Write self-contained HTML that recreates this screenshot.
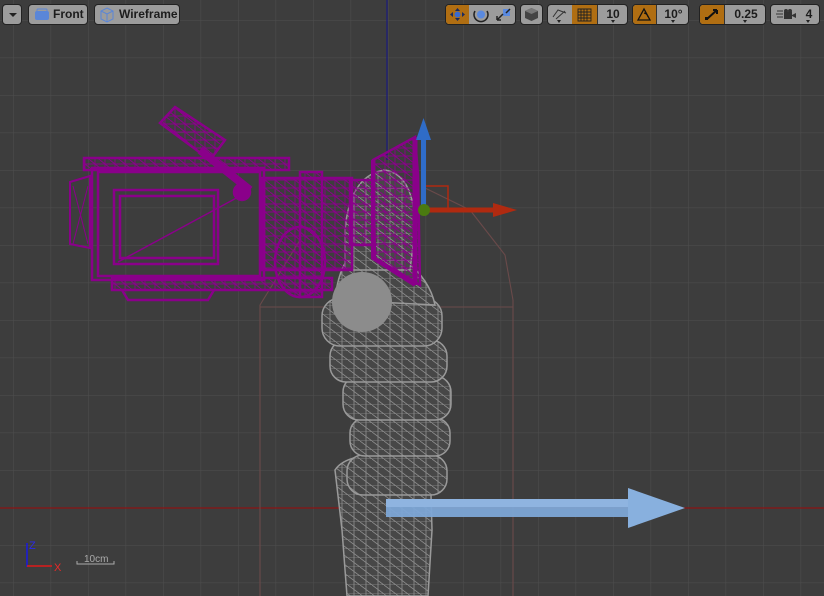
<!DOCTYPE html>
<html><head><meta charset="utf-8"><style>
html,body{margin:0;padding:0;width:824px;height:596px;overflow:hidden;background:#3d3d3d;font-family:"Liberation Sans",sans-serif}
.b{position:absolute;top:4px;height:21px;background:#9c9c9c;border:1px solid #222;border-radius:4px;box-sizing:border-box;font-size:12px;font-weight:bold;color:#1c1c1c;line-height:19px}
.o{position:absolute;top:0;bottom:0;background:#b06e12}
.sep{position:absolute;top:0;bottom:0;width:1px;background:#333}
.t{position:absolute;top:0;text-align:center}
.c{position:absolute;bottom:1px;width:0;height:0;border-left:2.5px solid transparent;border-right:2.5px solid transparent;border-top:3px solid #222}
</style></head><body>
<svg width="824" height="596" style="position:absolute;left:0;top:0">
<defs>
<pattern id="g" width="37.5" height="37.5" patternUnits="userSpaceOnUse" x="13" y="20">
<path d="M0 0V37.5M0 0H37.5" stroke="#4c4c4c" stroke-width="1.2" fill="none"/>
</pattern>
<pattern id="w" width="12" height="9" patternUnits="userSpaceOnUse">
<rect width="12" height="9" fill="#474747"/>
<path d="M0 0L12 9M0 9H12M6 0V9" stroke="#8e8e8e" stroke-width="0.8"/>
</pattern>
<pattern id="m" width="10" height="8" patternUnits="userSpaceOnUse">
<path d="M0 0L10 8M0 4H10M5 0V8" stroke="#8c008c" stroke-width="0.9"/>
</pattern>
</defs>
<rect width="824" height="596" fill="url(#g)"/>
<line x1="0" y1="508" x2="824" y2="508" stroke="#8a1414" stroke-width="1.2"/>
<line x1="387" y1="0" x2="387" y2="160" stroke="#1d1d7a" stroke-width="1.3"/>
<path d="M260 596V305L300 240M425 188L470 210L505 255L513 300V596M260 307H513M387 300V596" stroke="#6a4a4a" stroke-width="1.1" fill="none"/>
<g stroke="#9a9a9a" stroke-width="1.5" fill="url(#w)">
<path d="M347 596L342 530L335 470Q345 455 380 455L430 460L432 530L428 596Z"/>
<rect x="347" y="455" width="100" height="40" rx="16"/>
<rect x="350" y="418" width="100" height="38" rx="15"/>
<rect x="343" y="376" width="108" height="44" rx="16"/>
<rect x="330" y="340" width="117" height="42" rx="16"/>
<rect x="322" y="298" width="120" height="48" rx="18"/>
<path d="M335 300Q340 250 370 245L405 260Q430 280 435 305Z"/>
<path d="M345 230Q350 175 385 170Q415 175 415 230L410 270H345Z"/>
</g>
<circle cx="362" cy="302" r="30" fill="#8c8c8c"/>
<g stroke="#8a008a" stroke-width="2.5" fill="none">
<rect x="84" y="158" width="205" height="12" fill="url(#m)"/>
<rect x="92" y="168" width="172" height="112"/>
<rect x="98" y="172" width="162" height="104"/>
<rect x="114" y="190" width="104" height="74"/>
<rect x="120" y="196" width="94" height="62"/>
<line x1="118" y1="262" x2="242" y2="195" stroke-width="1.5"/>
<path d="M70 182L90 176V248L70 244Z" stroke-width="2"/>
<path d="M73 186L88 244M73 244L88 186" stroke-width="1"/>
<rect x="112" y="278" width="220" height="12" fill="url(#m)"/>
<path d="M122 290L128 300H208L214 290"/>
<path d="M160 123L175 107L225 140L210 160Z" fill="url(#m)"/>
<path d="M200 150L250 190" stroke-width="8"/>
<circle cx="242" cy="192" r="8" fill="#8a008a"/>
<rect x="262" y="178" width="90" height="92" fill="url(#m)"/>
<rect x="300" y="172" width="22" height="125" fill="url(#m)"/>
<ellipse cx="300" cy="262" rx="25" ry="35" fill="url(#m)"/>
<rect x="350" y="180" width="24" height="65" fill="url(#m)"/>
<path d="M373 160L415 137L418 175L420 285L375 258Z" fill="url(#m)"/>
<path d="M373 160L373 258L415 285" stroke-width="4"/>
<path d="M415 137V285" stroke-width="5"/>
</g>
<path d="M423 186H448V210" stroke="#b02a10" stroke-width="1.5" fill="none"/>
<rect x="421" y="138" width="5" height="72" fill="#2f6cc8"/>
<path d="M416 140L423.5 118L431 140Z" fill="#2f6cc8"/>
<rect x="424" y="207.5" width="72" height="5" fill="#b02a10"/>
<path d="M493 203L517 210L493 217Z" fill="#b02a10"/>
<circle cx="424" cy="210" r="6" fill="#4a7a10"/>
<rect x="386" y="499" width="245" height="18" fill="#7da6d6" opacity="0.95"/>
<rect x="386" y="499" width="245" height="8" fill="#8fb4e0"/>
<path d="M628 488L685 508L628 528Z" fill="#88b0de"/>
<line x1="27" y1="543" x2="27" y2="567" stroke="#1a1ae0" stroke-width="1.5"/>
<line x1="27" y1="566" x2="52" y2="566" stroke="#e01a1a" stroke-width="1.5"/>
<text x="29" y="549" fill="#2a2ae8" font-size="11" font-family="Liberation Sans">Z</text>
<text x="54" y="571" fill="#e82a2a" font-size="11" font-family="Liberation Sans">X</text>
<path d="M77 561V564H114V561" stroke="#aaa" fill="none"/>
<text x="84" y="562" fill="#aaa" font-size="10" font-family="Liberation Sans">10cm</text>
</svg>

<div class="b" style="left:2px;width:20px"><div class="c" style="left:6px;top:8px;border-left-width:4px;border-right-width:4px;border-top-width:4px"></div></div>
<div class="b" style="left:28px;width:60px"><svg width="18" height="14" style="position:absolute;left:4px;top:3px"><rect x="2" y="3" width="14" height="9" rx="2" fill="#5a86d8"/><rect x="4" y="1" width="10" height="5" rx="1" fill="none" stroke="#5a86d8"/></svg><span style="position:absolute;left:24px">Front</span></div>
<div class="b" style="left:94px;width:86px"><svg width="16" height="16" style="position:absolute;left:4px;top:2px"><path d="M8 1L14 4V12L8 15L2 12V4Z M2 4L8 7L14 4M8 7V15" stroke="#5a86d8" fill="none"/></svg><span style="position:absolute;left:24px">Wireframe</span></div>

<div class="b" style="left:445px;width:71px">
<div class="o" style="left:0;width:23px;border-radius:3px 0 0 3px"></div>
<svg width="71" height="19" style="position:absolute;left:0;top:0"><path d="M11.5 3L14 6H9ZM11.5 16L14 13H9ZM4 9.5L7 7V12ZM19 9.5L16 7V12Z" fill="#1a2a60"/><circle cx="11.5" cy="9.5" r="3" fill="#3a6ad0"/><circle cx="35" cy="9.5" r="4" fill="#5a8ae0"/><path d="M29 6A7 7 0 1 0 41 6" stroke="#222" stroke-width="1.5" fill="none"/><rect x="57" y="4" width="7" height="7" fill="#5a8ae0"/><path d="M51 15L57 9M51 15V11M51 15H55M64 4L60 8" stroke="#222" stroke-width="1.5"/></svg></div>
<div class="b" style="left:520px;width:23px"><svg width="21" height="19" style="position:absolute;left:0;top:0"><path d="M10.5 3L17 6V13L10.5 16L4 13V6Z" fill="#444"/><path d="M4 6L10.5 9L17 6L10.5 3Z" fill="#777"/></svg></div>
<div class="b" style="left:547px;width:81px">
<svg width="24" height="19" style="position:absolute;left:0;top:0"><path d="M5 12L10 5L18 8M8 14L17 6" stroke="#333" fill="none"/></svg><div class="c" style="left:9px"></div>
<div class="sep" style="left:24px"></div>
<div class="o" style="left:24px;width:25px"><svg width="25" height="19"><path d="M6 4H19V16H6ZM6 7H19M6 10H19M6 13H19M9 4V16M12 4V16M15 4V16" stroke="#222" fill="none" stroke-width="0.9"/></svg></div>
<div class="sep" style="left:49px"></div>
<div class="t" style="left:50px;width:30px">10</div><div class="c" style="left:63px"></div></div>
<div class="b" style="left:632px;width:57px">
<div class="o" style="left:0;width:23px;border-radius:3px 0 0 3px"><svg width="23" height="19"><path d="M5 15L11 4L17 15Z M11 8A5 5 0 0 1 15 12" stroke="#111" fill="none" stroke-width="1.3"/></svg></div>
<div class="sep" style="left:23px"></div>
<div class="t" style="left:24px;width:33px">10°</div><div class="c" style="left:38px"></div></div>
<div class="b" style="left:699px;width:67px">
<div class="o" style="left:0;width:24px;border-radius:3px 0 0 3px"><svg width="24" height="19"><path d="M7 14L17 5M17 5H13M17 5V9" stroke="#111" stroke-width="2" fill="none"/><rect x="5" y="12" width="3" height="3" fill="#111"/></svg></div>
<div class="sep" style="left:24px"></div>
<div class="t" style="left:25px;width:42px">0.25</div><div class="c" style="left:43px"></div></div>
<div class="b" style="left:770px;width:50px">
<svg width="26" height="19" style="position:absolute;left:3px;top:0"><path d="M3 6H9M2 9H9M3 12H9" stroke="#333"/><rect x="10" y="7" width="8" height="7" fill="#333"/><circle cx="12" cy="6" r="2" fill="#333"/><circle cx="16" cy="6" r="2" fill="#333"/><path d="M18 10L22 8V13L18 11Z" fill="#333"/></svg>
<div class="t" style="left:28px;width:20px">4</div><div class="c" style="left:35px"></div></div>
</body></html>
